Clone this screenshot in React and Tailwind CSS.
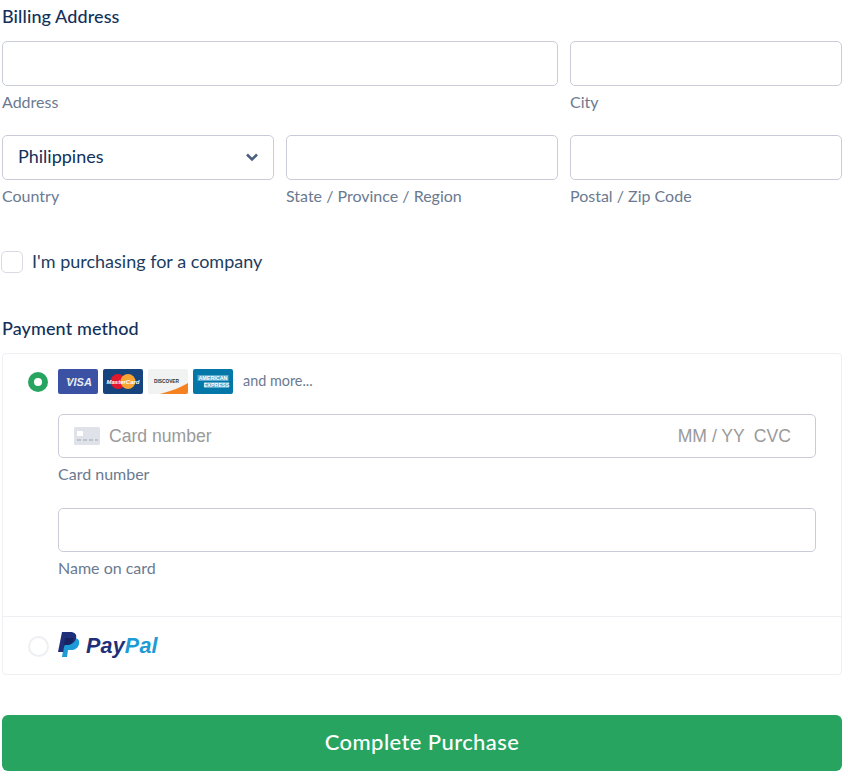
import React from "react";

function Field({ label, className = "", children }) {
  return (
    <div className={className}>
      {children || <div className="h-[45px] rounded-[5px] border border-[#c9ccd8] bg-white" />}
      <p className="mt-[6px] h-[21px] text-[16px] leading-[20px] text-[#6b7a90]">{label}</p>
    </div>
  );
}

function VisaCard() {
  return (
    <svg width="40" height="25" viewBox="0 0 40 25">
      <rect width="40" height="25" rx="2" fill="#3b52a4" />
      <path d="M8 9h4l1 3z" fill="#f4a83a" />
      <text x="21" y="17" textAnchor="middle" fontFamily="Liberation Sans" fontStyle="italic" fontWeight="700" fontSize="11" fill="#e8ebf5">VISA</text>
    </svg>
  );
}

function MasterCard() {
  return (
    <svg width="40" height="25" viewBox="0 0 40 25">
      <rect width="40" height="25" rx="2" fill="#17447c" />
      <circle cx="15" cy="12.500" r="7.500" fill="#e2182e" />
      <circle cx="25" cy="12.500" r="7.500" fill="#f9a533" />
      <text x="20" y="14.800" textAnchor="middle" fontFamily="Liberation Sans" fontStyle="italic" fontWeight="700" fontSize="6" fill="#fff">MasterCard</text>
    </svg>
  );
}

function DiscoverCard() {
  return (
    <svg width="40" height="25" viewBox="0 0 40 25">
      <rect width="40" height="25" rx="2" fill="#f1f2f2" />
      <path d="M12 25C24 22 33 18 40 14v9a2 2 0 0 1-2 2z" fill="#f58220" />
      <text x="18.500" y="14" textAnchor="middle" fontFamily="Liberation Sans" fontWeight="700" fontSize="4.800" fill="#333">DISCOVER</text>
    </svg>
  );
}

function AmexCard() {
  return (
    <svg width="40" height="25" viewBox="0 0 40 25">
      <rect width="40" height="25" rx="2" fill="#0477a9" />
      <rect x="4.500" y="6" width="31" height="6" fill="#5ba9cb" />
      <rect x="11" y="13" width="25" height="6" fill="#5ba9cb" />
      <text x="20" y="11.200" textAnchor="middle" fontFamily="Liberation Sans" fontWeight="700" fontSize="5.400" fill="#fff">AMERICAN</text>
      <text x="23.500" y="18.200" textAnchor="middle" fontFamily="Liberation Sans" fontWeight="700" fontSize="5.400" fill="#fff">EXPRESS</text>
    </svg>
  );
}

function CardGlyph() {
  return (
    <svg width="26" height="18" viewBox="0 0 26 18">
      <rect width="26" height="18" rx="1.500" fill="#dfe2e8" />
      <rect x="3" y="4" width="6" height="5" fill="#fff" />
      <path d="M3 13h4M9 13h4M15 13h4M21 13h3" stroke="#b4b9c4" strokeWidth="1.500" />
    </svg>
  );
}

function PayPalLogo() {
  return (
    <div className="flex items-start">
      <svg width="22" height="25" viewBox="0 0 22 25">
        <path d="M7 6h9c4 0 6 2.500 5 6-1 4-4 6-8 6h-3l-1 7H4z" fill="#1d9bd7" />
        <path d="M4 0h8c5 0 7 2.500 6 6.500S13 13 9 13H6.500l-1.300 7H0z" fill="#1f2f7a" />
        <path d="M7 6h8.500c.5 3.500-2.500 7-6.500 7H6.500l-.7 2z" fill="#17245f" />
      </svg>
      <span className="mt-[2px] ml-[6px] font-['Liberation_Sans',sans-serif] text-[21.500px] leading-[25px] font-bold italic tracking-[0.2px] text-[#1f2f7a]">
        Pay<span className="text-[#1d9bd7]">Pal</span>
      </span>
    </div>
  );
}

export default function App() {
  return (
    <div className="min-h-[781px] w-[848px] bg-white pt-[7px] pr-[6px] pl-[2px] font-['Lato',sans-serif] text-[#0f2f52]">
      <h2 className="h-[20px] text-[18px] leading-[18px] font-medium tracking-[0.1px] text-[#12305a]">Billing Address</h2>

      <div className="mt-[14px] grid grid-cols-3 gap-x-[12px] gap-y-[22px]">
        <Field label="Address" className="col-span-2" />
        <Field label="City" />
        <Field label="Country">
          <div className="flex h-[45px] items-center justify-between rounded-[5px] border border-[#c9ccd8] bg-white pr-[14px] pl-[15px] text-[18px] text-[#12305a]">
            <span className="pb-[2px]">Philippines</span>
            <svg width="14" height="10" viewBox="0 0 14 10" fill="none" className="mb-[2px]">
              <path d="M2 2.500l5 5 5-5" stroke="#4a6080" strokeWidth="2.600" />
            </svg>
          </div>
        </Field>
        <Field label="State / Province / Region" />
        <Field label="Postal / Zip Code" />
      </div>

      <div className="mt-[44px] -ml-[1px] flex items-center">
        <span className="h-[22px] w-[22px] rounded-[5px] border border-[#d9dbe2] bg-white" />
        <span className="ml-[9px] pb-[2px] text-[18px] leading-[20px] text-[#1d3d60]">I'm purchasing for a company</span>
      </div>

      <h2 className="mt-[46px] h-[20px] text-[18px] leading-[18px] font-medium tracking-[0.1px] text-[#12305a]">Payment method</h2>

      <div className="mt-[14px] h-[322px] rounded-[4px] border border-[#eeeff2]">
        <div className="h-[263px] border-b border-[#eeeff2] pt-[15px] pr-[25px] pl-[25px]">
          <div className="flex items-center">
            <span className="flex h-[20px] w-[20px] items-center justify-center rounded-full bg-[#27a560]">
              <span className="h-[8px] w-[8px] rounded-full bg-white" />
            </span>
            <div className="ml-[10px] flex gap-[5px]">
              <VisaCard />
              <MasterCard />
              <DiscoverCard />
              <AmexCard />
            </div>
            <span className="ml-[10px] pb-[2px] text-[14.400px] leading-[20px] text-[#6b7a90]">and more...</span>
          </div>

          <div className="mt-[20px] ml-[30px]">
            <Field label="Card number">
              <div className="flex h-[44px] items-center rounded-[5px] border border-[#c9ccd8] pr-[24px] pl-[15px] font-['Liberation_Sans',sans-serif] text-[17.600px] text-[#9a9a9a]">
                <CardGlyph />
                <span className="ml-[9px]">Card number</span>
                <span className="ml-auto">MM / YY</span>
                <span className="ml-[9px]">CVC</span>
              </div>
            </Field>
            <Field label="Name on card" className="mt-[23px]">
              <div className="h-[44px] rounded-[5px] border border-[#c9ccd8]" />
            </Field>
          </div>
        </div>

        <div className="flex items-start pt-[15px] pl-[25px]">
          <span className="mt-[4px] h-[21px] w-[21px] rounded-full border-2 border-[#eeeff2]" />
          <div className="ml-[9px]">
            <PayPalLogo />
          </div>
        </div>
      </div>

      <button className="mt-[40px] block h-[56px] w-full rounded-[6px] bg-[#27a560] pb-[3px] text-[22px] font-medium tracking-[0.4px] text-white">
        Complete Purchase
      </button>
    </div>
  );
}
